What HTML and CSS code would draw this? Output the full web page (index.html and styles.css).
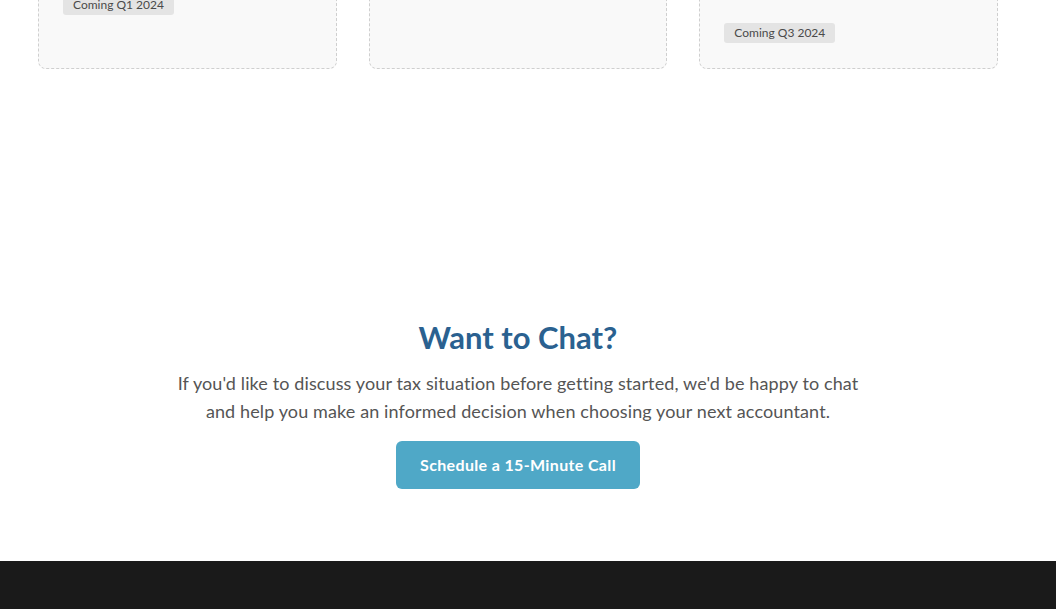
FILE: index.html
```html
<!DOCTYPE html>
<html lang="en">
<head>
<meta charset="utf-8">
<title>Want to Chat?</title>
<link rel="stylesheet" href="styles.css">
</head>
<body>
<div class="page">
  <section class="roadmap">
    <div class="container cards">
      <article class="card">
        <div class="card-head card-head-short"></div>
        <span class="badge">Coming Q1 2024</span>
      </article>
      <article class="card">
        <div class="card-head card-head-short"></div>
      </article>
      <article class="card">
        <div class="card-head card-head-tall"></div>
        <span class="badge">Coming Q3 2024</span>
      </article>
    </div>
  </section>

  <section class="chat">
    <div class="container chat-inner">
      <h2 class="chat-title">Want to Chat?</h2>
      <p class="chat-text">If you'd like to discuss your tax situation before getting started, we'd be happy to chat and help you make an informed decision when choosing your next accountant.</p>
      <a class="btn" href="#">Schedule a 15-Minute Call</a>
    </div>
  </section>
</div>
<footer class="footer"></footer>
</body>
</html>
```

FILE: styles.css
```css
* { box-sizing: border-box; }
html, body { margin: 0; padding: 0; }
body {
  font-family: "Segoe UI", Lato, "Open Sans", sans-serif;
  background: #ffffff;
  color: #333;
  overflow: hidden;
}
.page {
  width: calc(100% - 20px);
}
.container {
  max-width: 960px;
  margin: 0 auto;
}
.roadmap {
  margin-top: -100px;
}
.cards {
  display: grid;
  grid-template-columns: repeat(3, 1fr);
  gap: 32px;
}
.card {
  display: flex;
  flex-direction: column;
  align-items: flex-start;
  background: #f9f9f9;
  border: 1px dashed #cfcfcf;
  border-radius: 8px;
  padding: 24px 24px 25px;
}
.card-head-short { height: 70px; }
.card-head-tall { height: 98px; }
.badge {
  display: inline-block;
  background: #e4e4e4;
  color: #4a4a4a;
  font-size: 12px;
  font-weight: 400;
  line-height: 16px;
  padding: 2px 10px;
  border-radius: 3px;
}
.chat {
  padding: 248px 0 72px;
}
.chat-inner {
  display: flex;
  flex-direction: column;
  align-items: center;
  text-align: center;
}
.chat-title {
  margin: 0 0 12px;
  font-size: 31px;
  line-height: 40px;
  font-weight: 700;
  color: #2a6190;
}
.chat-text {
  margin: 0 0 16px;
  max-width: 700px;
  font-size: 18px;
  line-height: 28px;
  letter-spacing: 0.12px;
  color: #555;
}
.btn {
  display: inline-block;
  background: #4fa8c7;
  color: #fff;
  font-weight: 700;
  font-size: 16px;
  line-height: 20px;
  letter-spacing: 0.35px;
  padding: 14px 24px;
  border-radius: 6px;
  text-decoration: none;
}
.footer {
  background: #1a1a1a;
  height: 200px;
}
```
